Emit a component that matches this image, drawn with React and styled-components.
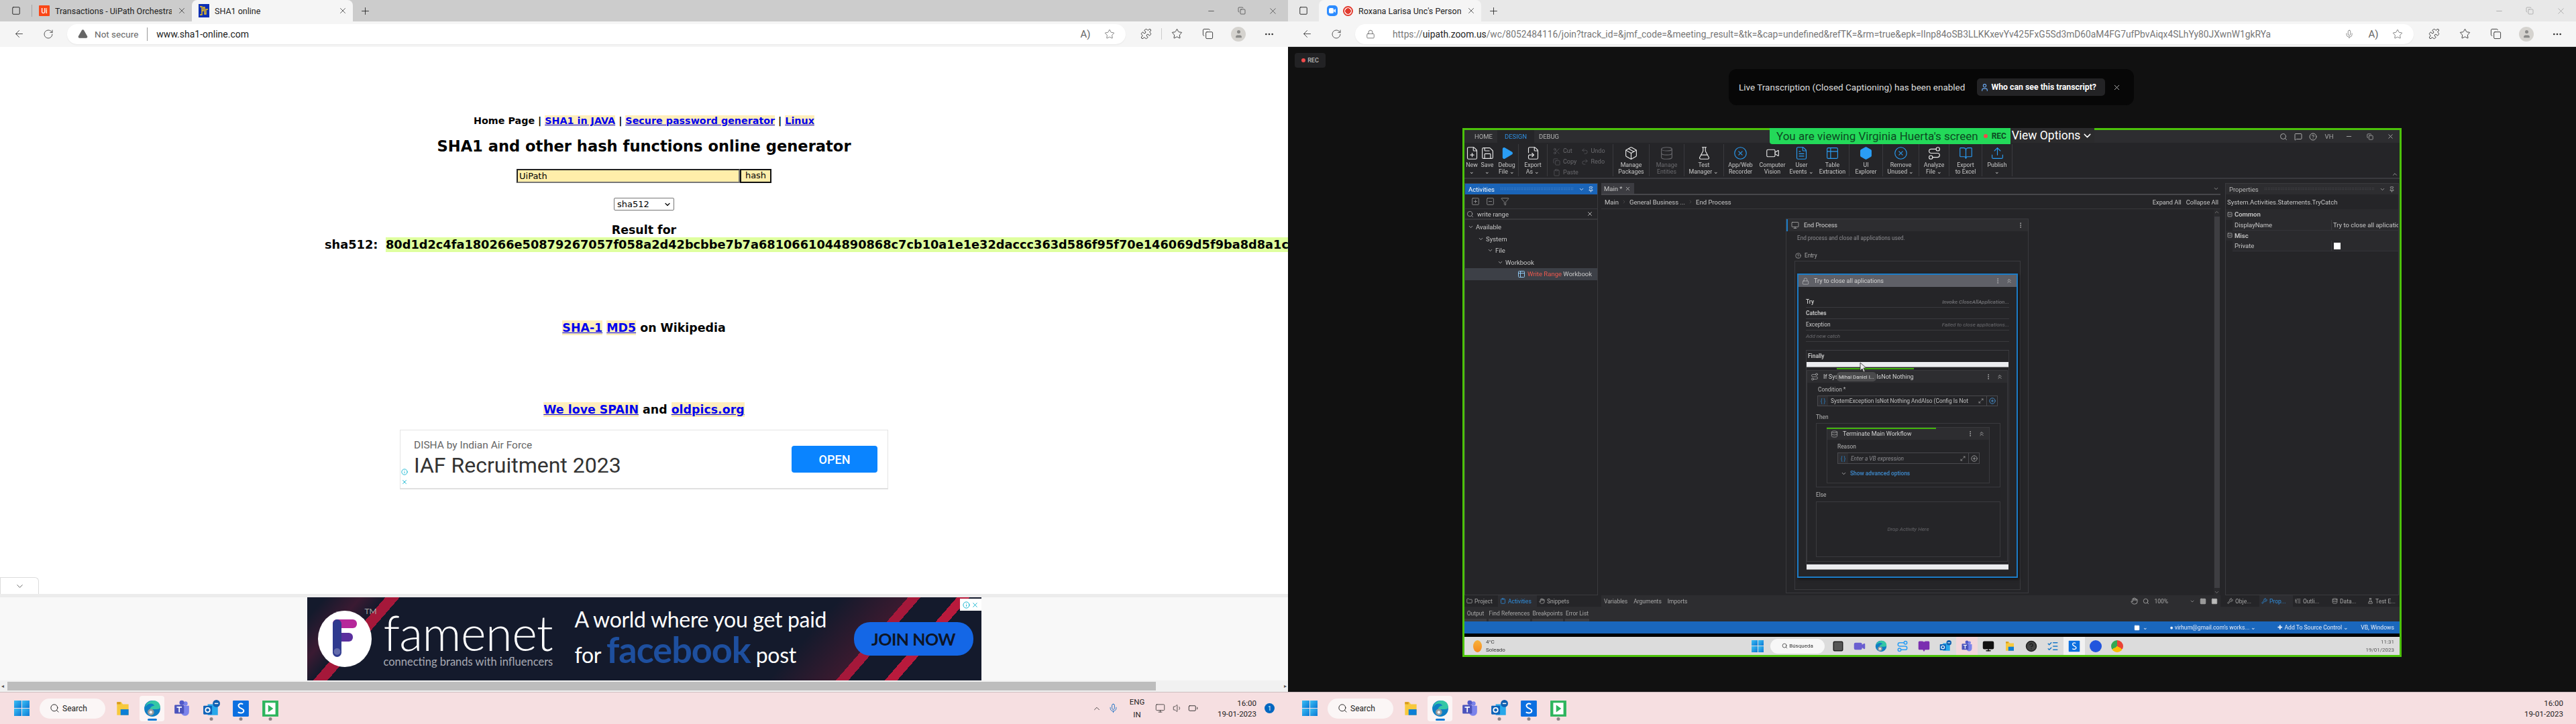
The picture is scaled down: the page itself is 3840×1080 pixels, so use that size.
import React from 'react'
import styled, { createGlobalStyle } from 'styled-components'
import {
  ArrowLeft, RotateCw, Plus, X, Minus, Copy, Star, Puzzle, MoreHorizontal, TriangleAlert, Lock, Search,
  ChevronDown, ChevronUp, ChevronsUp, ChevronRight, Mic, MicOff, Monitor, Volume1, FilePlus, Save, Play, Scissors,
  Undo2, Redo2, Clipboard, Package, Database, FlaskConical, Video, FileText, Table2, Hexagon, CircleX,
  Route, Upload, Pin, Filter, Hand, CircleHelp, MoreVertical, Maximize2, CirclePlus, Battery, Info,
  SquareMinus, SquarePlus, Folder, BookOpen, Wrench, ListTree, Database as DataIcon,
  MessageSquare, FileSymlink, Square, ListChecks, User,
} from 'lucide-react'

const GlobalStyle = createGlobalStyle`
  html, body { margin: 0; padding: 0; background: #fff; }
  body { width: 3840px; height: 1080px; overflow: hidden; font-family: Roboto, "Liberation Sans", sans-serif; }
  * { box-sizing: border-box; }
`

const Screen = styled.div`
  display: flex;
  width: 3840px;
  height: 1080px;
  overflow: hidden;
`

const Browser = styled.div`
  width: 1920px;
  height: 1080px;
  display: flex;
  flex-direction: column;
  overflow: hidden;
`

/* ---------- browser chrome ---------- */

const TabStrip = styled.div`
  height: 32px;
  flex: none;
  display: flex;
  background: ${p => p.$bg};
  color: ${p => p.$fg || '#222'};
`

const TabActions = styled.div`
  width: ${p => p.$w}px;
  display: flex;
  align-items: center;
  justify-content: center;
  position: relative;
  &::after {
    content: ${p => (p.$sep ? "''" : 'none')};
    position: absolute;
    right: 0;
    top: 7px;
    bottom: 7px;
    width: 1px;
    background: #a5a5a5;
  }
`

const Tab = styled.div`
  width: ${p => p.$w}px;
  display: flex;
  align-items: center;
  padding-left: ${p => p.$pad}px;
  padding-right: 8px;
  gap: 8px;
  font-size: 12.5px;
  color: #222;
  border-radius: 8px 8px 0 0;
  background: ${p => (p.$active ? '#f5f5f5' : 'transparent')};
`

const TabTitle = styled.span`
  flex: 1;
  white-space: nowrap;
  overflow: hidden;
`

const NewTab = styled.div`
  width: 36px;
  display: flex;
  align-items: center;
  justify-content: center;
`

const WindowControls = styled.div`
  margin-left: auto;
  display: flex;
  opacity: ${p => (p.$dim ? 0.45 : 1)};
`

const WindowButton = styled.div`
  width: 46px;
  display: flex;
  align-items: center;
  justify-content: center;
`

const Favicon = styled.div`
  width: ${p => p.$size || 16}px;
  height: ${p => p.$size || 16}px;
  flex: none;
  display: flex;
  align-items: center;
  justify-content: center;
  background: ${p => p.$bg};
  color: ${p => p.$fg || '#fff'};
  border-radius: ${p => p.$radius || 0}px;
  font-size: 10px;
  font-weight: 500;
`

const RecDot = styled.div`
  width: 15px;
  height: 15px;
  border-radius: 50%;
  flex: none;
  border: 2px solid #e23b2e;
  background: radial-gradient(circle, #e23b2e 0 4px, #fff 4.5px);
`

const AddressRow = styled.div`
  height: 38px;
  flex: none;
  display: flex;
  align-items: center;
  padding-left: 6px;
  background: #f5f5f5;
  border-bottom: 1px solid ${p => p.$line || 'transparent'};
`

const NavButton = styled.div`
  width: 44px;
  display: flex;
  justify-content: center;
  color: #333;
`

const AddressPill = styled.div`
  margin-left: 6px;
  width: 1578px;
  height: 30px;
  border-radius: 15px;
  background: #fff;
  display: flex;
  align-items: center;
  padding: 0 6px 0 16px;
  box-shadow: 0 1px 2px rgba(0, 0, 0, 0.06);
  color: #222;
  font-size: 14px;
`

const SecurityNote = styled.span`
  color: #666;
  margin-left: 10px;
  padding-right: 13px;
  border-right: 1px solid #999;
  line-height: 20px;
  font-size: 13.5px;
`

const UrlText = styled.span`
  margin-left: ${p => p.$left}px;
  white-space: nowrap;
  color: #777;
  font-size: ${p => p.$size}px;
`

const UrlHost = styled.span`
  color: #222;
`

const PillTools = styled.div`
  margin-left: auto;
  display: flex;
  align-items: center;
  color: #666;
`

const PillTool = styled.div`
  width: 36px;
  display: flex;
  justify-content: center;
  font-size: 15px;
`

const ToolSlot = styled.div`
  width: 46px;
  margin-left: ${p => p.$left || 0}px;
  display: flex;
  justify-content: center;
  color: #333;
  border-left: ${p => (p.$sep ? '1px solid #ccc' : 'none')};
`

const Avatar = styled.div`
  width: 22px;
  height: 22px;
  border-radius: 50%;
  background: #d5d3cf;
  color: #8a8a88;
  display: flex;
  align-items: center;
  justify-content: center;
`

/* ---------- sha1 page ---------- */

const PageFrame = styled.div`
  flex: 1;
  min-height: 0;
  display: flex;
  flex-direction: column;
  background: #fff;
`

const PageBody = styled.div`
  flex: 1;
  min-height: 0;
  overflow: hidden;
  display: flex;
  flex-direction: column;
  align-items: center;
  padding-top: 99px;
  font-family: "DejaVu Sans", Verdana, sans-serif;
  font-weight: 700;
  color: #000;
`

const TextLine = styled.div`
  line-height: 22px;
  height: 22px;
  white-space: nowrap;
  margin-top: ${p => p.$top || 0}px;
  font-size: ${p => p.$size}px;
`

const SiteLink = styled.a`
  color: #0000ee;
  text-decoration: underline;
  background: #ffeebb;
  padding: ${p => p.$pad || 0}px 0;
`

const PageTitle = styled.h1`
  margin: 12px 0 0;
  height: 30px;
  line-height: 30px;
  font-size: 22.6px;
  white-space: nowrap;
`

const HashForm = styled.div`
  margin-top: 19px;
  display: flex;
  height: 21px;
`

const HashInput = styled.div`
  width: 333px;
  background: #ffeeaa;
  border: 2px solid;
  border-color: #222 #777 #777 #222;
  padding-left: 2px;
  line-height: 17px;
  font-weight: 400;
  font-size: 13px;
`

const HashButton = styled.div`
  width: 47px;
  background: #ffeeaa;
  border: 2px solid #111;
  text-align: center;
  line-height: 16px;
  font-weight: 400;
  font-size: 13px;
`

const AlgoSelect = styled.div`
  margin-top: 22px;
  width: 90px;
  height: 19px;
  border: 1px solid #767676;
  border-radius: 2px;
  display: flex;
  align-items: center;
  justify-content: space-between;
  padding: 0 3px 0 4px;
  font-weight: 400;
  font-size: 13px;
`

const HashRow = styled.div`
  align-self: flex-start;
  display: flex;
  padding-left: 484px;
  height: 22px;
  line-height: 22px;
  white-space: nowrap;
  font-size: 17.75px;
`

const HashLabel = styled.span`
  width: 91px;
  flex: none;
`

const HashValue = styled.span`
  background: #dfff9f;
  padding-right: 200px;
`

const AdCard = styled.div`
  margin-top: 19px;
  width: 728px;
  height: 89px;
  flex: none;
  border: 1px solid #e4e4e4;
  border-bottom: 2px solid #e0e0e0;
  position: relative;
  display: flex;
  align-items: center;
  justify-content: space-between;
  padding: 0 15px 0 20px;
  font-family: Roboto, "Liberation Sans", sans-serif;
  font-weight: 400;
`

const AdSponsor = styled.div`
  font-size: 15.5px;
  color: #666;
  margin-top: -2px;
`

const AdTitle = styled.div`
  font-size: 32px;
  color: #333;
  margin-top: 2px;
`

const AdOpen = styled.div`
  width: 128px;
  height: 40px;
  background: #0a84ff;
  color: #fff;
  border-radius: 4px;
  display: flex;
  align-items: center;
  justify-content: center;
  font-size: 18px;
  font-weight: 500;
`

const AdChoices = styled.div`
  position: absolute;
  left: 1px;
  bottom: ${p => p.$bottom}px;
  color: #00aecd;
  display: flex;
`

const AnchorTab = styled.div`
  width: 58px;
  height: 25px;
  flex: none;
  background: #fff;
  border: 1px solid #dcdcdc;
  border-bottom: none;
  border-radius: 0 6px 0 0;
  display: flex;
  align-items: center;
  justify-content: center;
  color: #555;
`

const AnchorAd = styled.div`
  height: 129px;
  flex: none;
  background: #f8f8f8;
  border-top: 5px solid #ececec;
  display: flex;
  justify-content: center;
`

const FameBanner = styled.div`
  width: 1005px;
  height: 124px;
  position: relative;
  display: flex;
  align-items: center;
  color: #fff;
  font-family: Lato, "Open Sans", sans-serif;
  background-color: #141a2c;
  background-image:
    linear-gradient(131deg, transparent 88px, #a5183a 88px, #a5183a 104px, transparent 104px),
    linear-gradient(131deg, transparent 676px, #a5183a 676px, #a5183a 690px, transparent 690px, transparent 731px, #b81a3c 731px, #b81a3c 745px, transparent 745px),
    linear-gradient(131deg, transparent 20px, #3a1a32 60px, transparent 88px),
    linear-gradient(131deg, transparent 600px, #3a1a2f 676px, transparent 676px);
`

const FameCircle = styled.div`
  width: 80px;
  height: 84px;
  border-radius: 50%;
  background: #fff;
  margin-left: 16px;
  flex: none;
  display: flex;
  align-items: center;
  justify-content: center;
`

const FameBrand = styled.div`
  margin-left: 18px;
  width: 285px;
  flex: none;
  position: relative;
`

const FameName = styled.div`
  font-size: 72px;
  line-height: 66px;
  font-weight: 300;
  letter-spacing: -0.5px;
`

const FameTag = styled.div`
  font-size: 16.5px;
  color: #a8abb4;
  margin-top: 1px;
  white-space: nowrap;
`

const FameTm = styled.span`
  position: absolute;
  left: -28px;
  top: -6px;
  font-size: 12px;
  color: #aaa;
`

const FameCopy = styled.div`
  flex: none;
  width: 400px;
`

const FameLine = styled.div`
  font-size: ${p => p.$size}px;
  line-height: ${p => p.$line}px;
  white-space: nowrap;
  letter-spacing: -0.3px;
`

const FameWord = styled.span`
  color: #1e4f9e;
  font-size: 54px;
  font-weight: 700;
  margin: 0 8px;
  letter-spacing: -1px;
`

const JoinNow = styled.div`
  margin-left: 16px;
  width: 178px;
  height: 50px;
  flex: none;
  border-radius: 24px;
  background: #1467e6;
  color: #0d1526;
  display: flex;
  align-items: center;
  justify-content: center;
  font-size: 25px;
  font-weight: 700;
  letter-spacing: -0.5px;
`

const AdBadge = styled.div`
  position: absolute;
  top: 2px;
  right: 0;
  width: 32px;
  height: 18px;
  display: flex;
  justify-content: center;
  gap: 2px;
  background: #fff;
  color: #00aecd;
  align-items: center;
`

const HScrollbar = styled.div`
  height: 17px;
  flex: none;
  background: #f1f1f1;
  display: flex;
  align-items: center;
  padding: 0 2px;
  gap: 5px;
  color: #555;
  font-size: 8px;
`

const HThumb = styled.div`
  width: 1712px;
  height: 13px;
  background: #bdbdbd;
`

const HEnd = styled.span`
  margin-left: auto;
`

/* ---------- windows taskbar ---------- */

const Taskbar = styled.div`
  height: 48px;
  flex: none;
  display: flex;
  align-items: center;
  padding-left: 21px;
  background: #f6dfe1;
  border-top: 1px solid #cdbdbf;
  color: #222;
`

const StartLogo = styled.div`
  width: ${p => p.$size}px;
  height: ${p => p.$size}px;
  flex: none;
  display: grid;
  grid-template-columns: 1fr 1fr;
  gap: 1px;
  & > i { background: linear-gradient(135deg, #3cc0f5, #0b78d4); }
`

const SearchPill = styled.div`
  margin-left: 15px;
  margin-right: 4px;
  width: 98px;
  height: 30px;
  border-radius: 15px;
  background: #fbf6f6;
  display: flex;
  align-items: center;
  padding-left: 15px;
  gap: 4px;
  font-size: 12px;
`

const TaskSlot = styled.div`
  width: 44px;
  height: 47px;
  flex: none;
  display: flex;
  align-items: center;
  justify-content: center;
  position: relative;
  &::before {
    content: ${p => (p.$active ? "''" : 'none')};
    position: absolute;
    left: 3px;
    right: 4px;
    top: 5px;
    bottom: 4px;
    background: #fcf5f5;
    border-radius: 4px;
  }
  &::after {
    content: ${p => (p.$mark ? "''" : 'none')};
    position: absolute;
    bottom: 5px;
    left: 50%;
    width: ${p => (p.$active ? 14 : 5)}px;
    height: ${p => (p.$active ? 3 : 5)}px;
    transform: translateX(-50%);
    border-radius: 3px;
    background: ${p => (p.$active ? '#0a7ad6' : '#8c8487')};
  }
  & > svg { position: relative; z-index: 1; }
`

const Tray = styled.div`
  margin-left: auto;
  padding-right: ${p => p.$pad}px;
  display: flex;
  align-items: center;
  height: 100%;
`

const TraySlot = styled.div`
  width: ${p => p.$w}px;
  display: flex;
  justify-content: center;
  text-align: center;
  font-size: 11.5px;
  line-height: 19px;
`

const Clock = styled.div`
  text-align: right;
  font-size: 11.5px;
  line-height: 16px;
`

const NotifyDot = styled.div`
  margin-left: 12px;
  width: 15px;
  height: 15px;
  border-radius: 50%;
  background: #0067c0;
  color: #fff;
  font-size: 9px;
  display: flex;
  align-items: center;
  justify-content: center;
`

/* ---------- zoom meeting ---------- */

const MeetingStage = styled.div`
  flex: 1;
  min-height: 0;
  background: #111111;
  position: relative;
  padding: 121px 260px 0;
`

const RecBadge = styled.div`
  position: absolute;
  left: 10px;
  top: 9px;
  width: 46px;
  height: 22px;
  border-radius: 4px;
  background: #222224;
  color: #bbb;
  font-size: 9px;
  font-weight: 500;
  display: flex;
  align-items: center;
  justify-content: center;
  gap: 3px;
  &::before {
    content: '';
    width: 6px;
    height: 6px;
    border-radius: 50%;
    background: #f04b4b;
  }
`

const CaptionToast = styled.div`
  position: absolute;
  left: 657px;
  top: 33px;
  width: 604px;
  height: 54px;
  border-radius: 12px;
  background: #070707;
  color: #dedede;
  display: flex;
  align-items: center;
  padding-left: 15px;
  font-size: 13.5px;
  white-space: nowrap;
`

const WhoButton = styled.div`
  margin-left: 18px;
  width: 191px;
  height: 26px;
  border-radius: 5px;
  background: #232325;
  color: #fff;
  font-weight: 700;
  font-size: 12.3px;
  display: flex;
  align-items: center;
  gap: 3px;
  padding-left: 5px;
`

const ToastClose = styled.div`
  margin-left: 11px;
  display: flex;
`

const ShareFrame = styled.div`
  width: 1400px;
  height: 789px;
  position: relative;
  border: 3px solid #4cc20a;
  background: #252528;
`

const ViewingBanner = styled.div`
  position: absolute;
  left: 455px;
  top: -3px;
  width: 359px;
  height: 24px;
  background: #23d959;
  color: #0c4a22;
  border-radius: 0 0 0 4px;
  display: flex;
  align-items: center;
  gap: 4px;
  padding-left: 10px;
  font-size: 17px;
  white-space: nowrap;
`

const BannerRec = styled.span`
  margin-left: auto;
  margin-right: 10px;
  font-size: 12px;
  font-weight: 700;
  display: flex;
  align-items: center;
  gap: 6px;
  &::before {
    content: '';
    width: 6px;
    height: 6px;
    border-radius: 50%;
    background: #f04b4b;
  }
`

const ViewOptions = styled.div`
  position: absolute;
  left: 814px;
  top: -3px;
  width: 125px;
  height: 22px;
  background: #2b2b2d;
  color: #fff;
  display: flex;
  align-items: center;
  justify-content: center;
  gap: 2px;
  font-size: 17.5px;
  white-space: nowrap;
`

const Studio = styled.div`
  height: 100%;
  display: flex;
  flex-direction: column;
  color: #c8c8c8;
  font-size: 9px;
  filter: blur(0.3px);
  overflow: hidden;
`

const StudioTitle = styled.div`
  height: 19px;
  flex: none;
  display: flex;
  align-items: stretch;
  background: #2d2d30;
  padding-left: 8px;
  font-size: 9.5px;
`

const StudioMenu = styled.div`
  width: ${p => p.$w}px;
  display: flex;
  align-items: center;
  justify-content: center;
  background: ${p => (p.$active ? '#252528' : 'transparent')};
  color: ${p => (p.$active ? '#2f8fe0' : '#b4b4b4')};
`

const TitleTools = styled.div`
  margin-left: auto;
  display: flex;
  align-items: center;
  color: #aaa;
`

const TitleTool = styled.div`
  width: ${p => p.$w}px;
  display: flex;
  justify-content: center;
  font-size: 9.5px;
`

const Ribbon = styled.div`
  height: 54px;
  flex: none;
  display: flex;
  background: #252528;
  border-bottom: 2px solid #3a3a3e;
  position: relative;
`

const RibbonItem = styled.div`
  width: ${p => p.$w}px;
  flex: none;
  margin: 2px 0;
  padding-top: 3px;
  display: flex;
  flex-direction: column;
  align-items: center;
  text-align: center;
  line-height: 9.5px;
  font-size: 8.8px;
  color: ${p => (p.$dim ? '#6b6b6f' : '#c8c8c8')};
  border-right: 1px solid ${p => (p.$sep ? '#3a3a3e' : 'transparent')};
  & > svg { flex: none; margin-bottom: 3px; }
`

const RibbonClip = styled.div`
  width: 98px;
  flex: none;
  margin: 2px 0;
  display: grid;
  grid-template-columns: 1fr 1fr;
  grid-auto-rows: 16px;
  padding: 2px 6px 0 8px;
  border-right: 1px solid #3a3a3e;
  color: #6b6b6f;
  font-size: 9px;
`

const ClipAction = styled.div`
  display: flex;
  align-items: center;
  gap: 4px;
`

const RibbonCollapse = styled.div`
  position: absolute;
  right: 2px;
  bottom: 0;
  display: flex;
  color: #aaa;
`

const PanelRow = styled.div`
  flex: 1;
  min-height: 0;
  display: flex;
  padding-top: 6px;
  background: #252528;
`

const SideColumn = styled.div`
  width: ${p => p.$w}px;
  margin-right: ${p => p.$gap}px;
  flex: none;
  display: flex;
  flex-direction: column;
`

const PanelBox = styled.div`
  flex: 1;
  min-height: 0;
  border: 1px solid #3a3a3e;
  display: flex;
  flex-direction: column;
`

const PanelHeader = styled.div`
  height: 16px;
  flex: none;
  display: flex;
  align-items: center;
  gap: 5px;
  padding: 0 5px;
  background: ${p => (p.$active ? '#1a64b8' : '#2d2d30')};
  color: ${p => (p.$active ? '#fff' : '#b8b8b8')};
  font-size: 9.5px;
`

const HeaderDots = styled.span`
  flex: 1;
  height: 6px;
  margin: 0 3px;
  background-image: radial-gradient(${p => (p.$active ? '#6ea0d8' : '#5a5a5e')} 0.6px, transparent 0.7px);
  background-size: 2.5px 2.5px;
`

const IconBar = styled.div`
  height: 22px;
  flex: none;
  display: flex;
  align-items: center;
  padding-left: 9px;
  gap: 9px;
  color: #b0b0b0;
  border-bottom: 1px solid #3a3a3e;
`

const TreeSearch = styled.div`
  height: 16px;
  flex: none;
  display: flex;
  align-items: center;
  gap: 5px;
  padding: 0 6px 0 2px;
  font-size: 9.5px;
  color: #c8c8c8;
  border-bottom: 2px solid #37373b;
`

const SearchClear = styled.span`
  margin-left: auto;
  display: flex;
`

const Tree = styled.div`
  padding-top: 2px;
`

const TreeRow = styled.div`
  height: 17.5px;
  display: flex;
  align-items: center;
  gap: 3px;
  padding-left: ${p => p.$indent}px;
  font-size: 9.5px;
  background: ${p => (p.$hit ? '#3d4047' : 'transparent')};
`

const TreeHit = styled.span`
  color: #f0584d;
`

const DockTabs = styled.div`
  height: 17px;
  flex: none;
  display: flex;
  align-items: center;
  font-size: 8.5px;
`

const DockTab = styled.div`
  width: ${p => p.$w}px;
  height: 100%;
  display: flex;
  align-items: center;
  gap: 3px;
  padding-left: 3px;
  color: ${p => (p.$active ? '#2f8fe0' : '#a8a8a8')};
  background: ${p => (p.$active ? '#2d2d31' : 'transparent')};
  white-space: nowrap;
`

const DesignerFooter = styled(DockTabs)`
  background: #2d2d30;
  padding-left: 4px;
  gap: 9px;
  color: #aaa;
`

const ZoomTools = styled.span`
  margin-left: auto;
  display: flex;
  align-items: center;
  gap: 7px;
  padding-right: 4px;
`

const ZoomGap = styled.span`
  width: 18px;
`

const CenterColumn = styled.div`
  width: 923px;
  margin-right: 7px;
  flex: none;
  display: flex;
  flex-direction: column;
`

const DocTabs = styled.div`
  height: 18px;
  flex: none;
  display: flex;
  justify-content: space-between;
  align-items: stretch;
  border-bottom: 2px solid #47474b;
  padding-right: 2px;
  color: #aaa;
`

const DocTab = styled.div`
  width: 49px;
  display: flex;
  align-items: center;
  justify-content: space-between;
  padding: 0 5px 0 4px;
  background: #3c3c41;
  color: #c8c8c8;
  font-size: 9.5px;
`

const DocTabEnd = styled.div`
  display: flex;
  align-items: center;
`

const Breadcrumbs = styled.div`
  height: 21px;
  flex: none;
  display: flex;
  align-items: center;
  gap: 4px;
  padding: 0 3px 0 5px;
  border-bottom: 1px solid #37373b;
  font-size: 9.5px;
`

const CrumbEnd = styled.div`
  margin-left: auto;
  display: flex;
  gap: 7px;
  font-size: 9.2px;
`

const CanvasRow = styled.div`
  flex: 1;
  min-height: 0;
  display: flex;
`

const Canvas = styled.div`
  flex: 1;
  min-width: 0;
  padding: 14px 0 0 275px;
  overflow: hidden;
`

const VScroll = styled.div`
  width: 9px;
  margin-right: 1px;
  flex: none;
  display: flex;
  flex-direction: column;
  align-items: center;
  color: #888;
  background: #2a2a2d;
`

const VThumb = styled.div`
  width: 8px;
  flex: 1;
  background: #3e3e42;
  margin: 2px 0;
`

const Activity = styled.div`
  width: ${p => p.$w}px;
  height: ${p => p.$h}px;
  margin-left: ${p => p.$left || 0}px;
  margin-top: ${p => p.$top || 0}px;
  flex: none;
  border: 1px solid #3a3a3e;
  position: relative;
`

const ActivityHead = styled.div`
  height: 18px;
  display: flex;
  align-items: center;
  gap: 7px;
  padding: 0 6px 0 5px;
  background: ${p => p.$bg || '#2d2d30'};
  border-left: ${p => (p.$mark ? '2px solid #1c7cc7' : 'none')};
  color: #d4d4d4;
  font-size: 9px;
`

const HeadEnd = styled.span`
  margin-left: auto;
  display: flex;
  align-items: center;
  gap: 7px;
  color: #bbb;
`

const Muted = styled.div`
  color: #8e8e92;
  font-size: 8.2px;
  line-height: 12px;
  padding: ${p => p.$pad || 0};
`

const EntryLabel = styled.div`
  display: flex;
  align-items: center;
  gap: 5px;
  padding-left: 13px;
  margin-top: ${p => p.$top}px;
  height: 12px;
  color: #aaa;
  font-size: 8.2px;
`

const TryCard = styled.div`
  margin: 18px 0 0 3px;
  width: 329px;
  height: 454px;
  border: 2px solid #1c7cc7;
  background: #252528;
  box-shadow: 2px 2px 4px rgba(0, 0, 0, 0.5);
  position: relative;
`

const TryRows = styled.div`
  padding: 14px 11px 0 11px;
`

const TryRow = styled.div`
  height: 17px;
  display: flex;
  align-items: center;
  justify-content: space-between;
  border-bottom: 1px solid #3a3a3e;
  font-size: 8.4px;
  font-weight: ${p => (p.$bold ? 600 : 400)};
  color: #c8c8c8;
`

const Hint = styled.span`
  font-style: italic;
  color: #6c6c70;
  font-size: 8px;
`

const FinallyBox = styled.div`
  margin: 12px 11px 0;
  height: 320px;
  border: 1px solid #38383c;
  border-top-color: #3e3e42;
  padding: 1px 0 0 0;
`

const FinallyLabel = styled.div`
  height: 16px;
  line-height: 14px;
  padding-left: 2px;
  font-size: 8.4px;
  font-weight: 600;
`

const WhiteBar = styled.div`
  height: 8px;
  background: #ecedf0;
  border-bottom: 1px solid #999;
  margin: ${p => p.$margin || '0'};
  width: 301px;
`

const FieldLabel = styled.div`
  font-size: 8.4px;
  height: 12px;
  line-height: 12px;
  color: #b5b5b5;
  padding-left: ${p => p.$left}px;
  margin-top: ${p => p.$top}px;
`

const ExprField = styled.div`
  width: ${p => p.$w}px;
  height: ${p => p.$h}px;
  margin-left: ${p => p.$left}px;
  margin-top: 3px;
  border: 1px solid #4a4a4e;
  display: flex;
  align-items: center;
  font-size: 8.4px;
  color: #c0c0c0;
`

const ExprBrace = styled.span`
  width: 15px;
  height: 100%;
  display: flex;
  align-items: center;
  justify-content: center;
  background: #2e2e32;
  color: #2a7fc0;
  margin-right: 4px;
  flex: none;
`

const ExprText = styled.span`
  flex: 1;
  overflow: hidden;
  white-space: nowrap;
  font-style: ${p => (p.$hint ? 'italic' : 'normal')};
  color: ${p => (p.$hint ? '#8c8c90' : '#c0c0c0')};
`

const ExprTool = styled.span`
  width: 16px;
  height: 100%;
  display: flex;
  align-items: center;
  justify-content: center;
  border-left: ${p => (p.$line ? '1px solid #4a4a4e' : 'none')};
  color: #aaa;
  flex: none;
`

const AdvancedLine = styled.div`
  display: flex;
  align-items: center;
  gap: 5px;
  margin: 9px 0 0 20px;
  color: #3d86c6;
  font-weight: 600;
  font-size: 8.4px;
`

const DropHint = styled.div`
  height: 100%;
  display: flex;
  align-items: center;
  justify-content: center;
  font-style: italic;
  color: #66666a;
  font-size: 8px;
`

const GreenStroke = styled.div`
  position: absolute;
  left: ${p => p.$left}px;
  top: ${p => p.$top}px;
  width: ${p => p.$w}px;
  height: 1.5px;
  background: #42b30c;
`

const NameTip = styled.div`
  position: absolute;
  left: 44px;
  top: 2px;
  width: 59px;
  height: 14px;
  border-radius: 5px;
  background: #4a4a4c;
  color: #ddd;
  font-size: 7.8px;
  display: flex;
  align-items: center;
  justify-content: center;
  white-space: nowrap;
`

const PointerMark = styled.svg`
  position: absolute;
  left: 78px;
  top: -13px;
`

const TypeLine = styled.div`
  height: 22px;
  flex: none;
  display: flex;
  align-items: center;
  padding-left: 2px;
  font-size: 9.5px;
  white-space: nowrap;
  overflow: hidden;
`

const PropGroup = styled.div`
  height: 15.5px;
  display: flex;
  align-items: center;
  gap: 3px;
  padding-left: 2px;
  background: #2a2a2d;
  font-weight: 600;
  font-size: 9.5px;
`

const PropRow = styled.div`
  height: 16px;
  display: grid;
  grid-template-columns: 147px 1fr;
  align-items: center;
  margin-left: 10px;
  background: #2a2a2d;
  border-bottom: 1px solid #343438;
  font-size: 9.5px;
`

const PropKey = styled.span`
  padding-left: 3px;
`

const PropValue = styled.span`
  border-left: 1px solid #3a3a3e;
  padding-left: 2px;
  height: 100%;
  display: flex;
  align-items: center;
  white-space: nowrap;
  overflow: hidden;
`

const PropCheck = styled.span`
  width: 10px;
  height: 10px;
  background: #fff;
  margin-left: 1px;
`

const OutputTabs = styled.div`
  height: 22px;
  flex: none;
  display: flex;
  background: #2d2d30;
  padding-top: 5px;
  gap: 3px;
  font-size: 8.5px;
`

const OutputTab = styled.div`
  width: ${p => p.$w}px;
  height: 17px;
  text-align: center;
  white-space: nowrap;
  border-bottom: 4px solid #3d3d41;
  color: #a8a8a8;
`

const StatusBar = styled.div`
  height: 18px;
  flex: none;
  background: #1a67bd;
  color: #e8eefa;
  display: flex;
  align-items: center;
  justify-content: flex-end;
  gap: 8px;
  padding-right: 8px;
  font-size: 8.6px;
`

const StatusPart = styled.span`
  display: flex;
  align-items: center;
  gap: 4px;
  margin-right: ${p => p.$gap || 0}px;
  white-space: nowrap;
`

const BlackBand = styled.div`
  height: 5px;
  flex: none;
  background: #000;
`

const InnerTaskbar = styled.div`
  height: 27px;
  flex: none;
  background: #dcdcdc;
  display: flex;
  align-items: center;
  color: #333;
  font-size: 8px;
  padding-left: 13px;
`

const Weather = styled.div`
  width: 415px;
  flex: none;
  display: flex;
  align-items: center;
  gap: 6px;
  line-height: 12px;
`

const SunDot = styled.div`
  width: 13px;
  height: 18px;
  border-radius: 50%;
  background: linear-gradient(#f7b23c, #f58a1f);
`

const InnerSearch = styled.div`
  width: 81px;
  height: 22px;
  margin: 0 4px 0 10px;
  border-radius: 11px;
  background: #f7f7f7;
  display: flex;
  align-items: center;
  justify-content: center;
  gap: 2px;
  font-size: 8px;
  flex: none;
`

const InnerSlot = styled.div`
  width: 32px;
  height: 100%;
  flex: none;
  display: flex;
  align-items: center;
  justify-content: center;
  background: ${p => p.$bg || 'transparent'};
`

const InnerClock = styled.div`
  margin-left: auto;
  padding-right: 8px;
  text-align: right;
  line-height: 12px;
  color: #555;
`

/* ---------- small drawings ---------- */

const UiPathIcon = () => (
  <Favicon $size={16} $bg="#fa4616" $fg="#fff" $radius={1}>Ui</Favicon>
)

const ShaIcon = () => (
  <svg width="16" height="20" viewBox="0 0 16 20">
    <rect width="16" height="20" fill="#0d2fb5" />
    <path d="M2 4h3v12H2M5 10h2V5h2v10h2V8h3" fill="none" stroke="#f2c21a" strokeWidth="1.4" />
  </svg>
)

const ZoomIcon = () => (
  <Favicon $size={16} $bg="#2d8cff" $radius={5}>
    <svg width="10" height="8" viewBox="0 0 10 8"><rect width="7" height="8" rx="2" fill="#fff" /><path d="M7.5 3l2.5-2v6L7.5 5z" fill="#fff" /></svg>
  </Favicon>
)

const ExplorerIcon = ({ size = 26 }) => (
  <svg width={size} height={size} viewBox="0 0 24 24">
    <path d="M4 3h6l2 3h8v15H4z" fill="#f7c93e" />
    <path d="M4 3h5v3H4z" fill="#d89a1c" />
    <rect x="9" y="13" width="11" height="8" fill="#0d7fd6" />
  </svg>
)

const EdgeIcon = ({ size = 26 }) => (
  <svg width={size} height={size} viewBox="0 0 24 24">
    <circle cx="12" cy="12" r="11" fill="#0f7fc4" />
    <path d="M2 11C3 4 9 1 14 1c5 0 9 4 9 9 0 2-2 3-5 3H9c0-3 3-5 6-5-1-2-3-3-5-3-4 0-7 3-8 6z" fill="#35c7a5" />
    <circle cx="10" cy="17" r="4.5" fill="#9a9a9a" />
    <circle cx="10" cy="17" r="2" fill="#f1f1f1" />
  </svg>
)

const TeamsIcon = ({ size = 26 }) => (
  <svg width={size} height={size} viewBox="0 0 24 24">
    <circle cx="17" cy="5" r="3" fill="#7b83eb" />
    <path d="M11 8h11v8a5 5 0 0 1-11 1z" fill="#7b83eb" />
    <circle cx="12" cy="4" r="3.2" fill="#5059c9" />
    <rect x="2" y="7" width="13" height="12" rx="1" fill="#4b53bc" />
    <path d="M5 10h7M8.5 10v7" stroke="#fff" strokeWidth="1.6" />
  </svg>
)

const OutlookIcon = ({ size = 26 }) => (
  <svg width={size} height={size} viewBox="0 0 24 24">
    <rect x="7" y="6" width="14" height="15" fill="#28a8ea" />
    <rect x="1" y="8" width="12" height="12" rx="1" fill="#0f63b8" />
    <circle cx="7" cy="14" r="3" fill="none" stroke="#fff" strokeWidth="1.6" />
    <circle cx="19" cy="5" r="5" fill="#0f5fb0" />
    <path d="M16.5 5h5" stroke="#fff" strokeWidth="1.4" />
  </svg>
)

const SwapIcon = ({ size = 26 }) => (
  <svg width={size} height={size} viewBox="0 0 24 24">
    <rect x="1" y="1" width="22" height="22" rx="1" fill="#0b6fe0" />
    <path d="M15 6c-4-2-7 0-6 3 1 3 7 3 7 6s-4 4-8 2" fill="none" stroke="#fff" strokeWidth="1.8" />
  </svg>
)

const GreenAppIcon = ({ size = 26 }) => (
  <svg width={size} height={size} viewBox="0 0 24 24">
    <rect x="1" y="1" width="22" height="22" fill="#2db55d" />
    <rect x="5" y="4" width="14" height="16" fill="#fff" />
    <path d="M9 7l7 5-7 5z" fill="#2db55d" />
  </svg>
)

const FameMark = () => (
  <svg width="44" height="62" viewBox="0 0 44 62">
    <rect x="4" y="2" width="36" height="13" rx="6" fill="#b6279a" />
    <rect x="4" y="22" width="30" height="13" rx="6" fill="#5a2f9e" />
    <rect x="4" y="2" width="13" height="56" rx="6.5" fill="#2f3a8f" />
    <circle cx="10.5" cy="50" r="5" fill="#fff" opacity="0.25" />
  </svg>
)

const PageCursor = () => (
  <PointerMark width="12" height="17" viewBox="0 0 12 17">
    <path d="M1 1v12l3-3 2 5 2-1-2-5h4z" fill="#eee" stroke="#222" strokeWidth="0.8" />
  </PointerMark>
)

/* ---------- data ---------- */

const ribbonItems = [
  { key: 'new', w: 23, label: ['New', '⌄'], icon: FilePlus, color: '#e8e8e8' },
  { key: 'save', w: 23, label: ['Save', '⌄'], icon: Save, color: '#e8e8e8' },
  { key: 'debug', w: 35, label: ['Debug', 'File ⌄'], icon: Play, color: '#2a9df4', fill: true, sep: true },
  { key: 'export', w: 43, label: ['Export', 'As ⌄'], icon: FileSymlink, color: '#e8e8e8', sep: true },
  { key: 'clip' },
  { key: 'pack', w: 54, label: ['Manage', 'Packages'], icon: Package, color: '#e8e8e8', sep: true },
  { key: 'ent', w: 52, label: ['Manage', 'Entities'], icon: Database, color: '#66666a', dim: true, sep: true },
  { key: 'test', w: 59, label: ['Test', 'Manager ⌄'], icon: FlaskConical, color: '#e8e8e8', sep: true },
  { key: 'rec', w: 50, label: ['App/Web', 'Recorder'], icon: CircleX, color: '#2a9df4' },
  { key: 'vis', w: 45, label: ['Computer', 'Vision'], icon: Video, color: '#e8e8e8' },
  { key: 'evt', w: 42, label: ['User', 'Events ⌄'], icon: FileText, color: '#2a9df4' },
  { key: 'tab', w: 50, label: ['Table', 'Extraction'], icon: Table2, color: '#2a9df4', sep: true },
  { key: 'ui', w: 50, label: ['UI', 'Explorer'], icon: Hexagon, color: '#2a9df4', fill: true, sep: true },
  { key: 'rem', w: 54, label: ['Remove', 'Unused ⌄'], icon: CircleX, color: '#2a9df4', sep: true },
  { key: 'ana', w: 45, label: ['Analyze', 'File ⌄'], icon: Route, color: '#e8e8e8', sep: true },
  { key: 'xls', w: 49, label: ['Export', 'to Excel'], icon: BookOpen, color: '#2a9df4', sep: true },
  { key: 'pub', w: 45, label: ['Publish', '⌄'], icon: Upload, color: '#2a9df4', sep: true },
]

const innerTaskIcons = [
  { key: 'a', icon: () => <Square size={18} color="#222" fill="#555" /> },
  { key: 'b', icon: () => <Video size={18} color="#6a5fd0" fill="#6a5fd0" /> },
  { key: 'c', icon: () => <EdgeIcon size={18} /> },
  { key: 'd', icon: () => <Route size={18} color="#2a9df4" /> },
  { key: 'e', icon: () => <BookOpen size={18} color="#7a2fb0" fill="#7a2fb0" /> },
  { key: 'f', icon: () => <OutlookIcon size={18} /> },
  { key: 'g', icon: () => <TeamsIcon size={18} />, bg: '#f3d8dc' },
  { key: 'h', icon: () => <Monitor size={18} color="#111" fill="#111" /> },
  { key: 'i', icon: () => <ExplorerIcon size={18} /> },
  { key: 'j', icon: () => <CircleHelp size={18} color="#222" fill="#444" /> },
  { key: 'k', icon: () => <ListChecks size={18} color="#1677c8" /> },
  { key: 'l', icon: () => <SwapIcon size={18} />, bg: '#f2f2f2' },
  { key: 'm', icon: () => <Favicon $size={18} $bg="#2255dd" $radius={9} /> },
  { key: 'n', icon: () => <Favicon $size={18} $bg="conic-gradient(#ea4335 0 33%, #fbbc05 33% 66%, #34a853 66%)" $radius={9} /> },
]

const hashValue = '80d1d2c4fa180266e50879267057f058a2d42bcbbe7b7a6810661044890868c7cb10a1e1e32daccc363d586f95f70e146069d5f9ba8d8a1c'

/* ---------- parts ---------- */

function SharedTaskIcons() {
  return (
    <>
      <TaskSlot><ExplorerIcon /></TaskSlot>
      <TaskSlot $active $mark><EdgeIcon /></TaskSlot>
      <TaskSlot><TeamsIcon /></TaskSlot>
      <TaskSlot $mark><OutlookIcon /></TaskSlot>
      <TaskSlot $mark><SwapIcon /></TaskSlot>
      <TaskSlot $mark><GreenAppIcon /></TaskSlot>
    </>
  )
}

function Start({ size = 23 }) {
  return (
    <StartLogo $size={size}><i /><i /><i /><i /></StartLogo>
  )
}

function BrowserTools({ sep }) {
  return (
    <>
      <ToolSlot $left={7}><Puzzle size={17} strokeWidth={1.3} /></ToolSlot>
      <ToolSlot $sep={sep}><Star size={17} strokeWidth={1.3} /></ToolSlot>
      <ToolSlot><Copy size={17} strokeWidth={1.3} /></ToolSlot>
      <ToolSlot><Avatar><User size={15} fill="#8a8a88" strokeWidth={0} /></Avatar></ToolSlot>
      <ToolSlot><MoreHorizontal size={16} strokeWidth={2} /></ToolSlot>
    </>
  )
}

function WindowButtons({ dim }) {
  return (
    <WindowControls $dim={dim}>
      <WindowButton><Minus size={13} strokeWidth={1.2} /></WindowButton>
      <WindowButton><Copy size={12} strokeWidth={1.2} /></WindowButton>
      <WindowButton><X size={15} strokeWidth={1} /></WindowButton>
    </WindowControls>
  )
}

function ShaPage() {
  return (
    <PageFrame>
      <PageBody>
        <TextLine $size={14.3}>
          Home Page | <SiteLink>SHA1 in JAVA</SiteLink> | <SiteLink>Secure password generator</SiteLink> | <SiteLink>Linux</SiteLink>
        </TextLine>
        <PageTitle>SHA1 and other hash functions online generator</PageTitle>
        <HashForm>
          <HashInput>UiPath</HashInput>
          <HashButton>hash</HashButton>
        </HashForm>
        <AlgoSelect>sha512 <ChevronDown size={12} strokeWidth={2.4} /></AlgoSelect>
        <TextLine $top={18} $size={17.4}>Result for</TextLine>
        <HashRow><HashLabel>sha512:</HashLabel><HashValue>{hashValue}</HashValue></HashRow>
        <TextLine $top={102} $size={17.4}>
          <SiteLink $pad={1}>SHA-1</SiteLink> <SiteLink $pad={1}>MD5</SiteLink> on Wikipedia
        </TextLine>
        <TextLine $top={100} $size={17.4}>
          <SiteLink $pad={1}>We love SPAIN</SiteLink> and <SiteLink $pad={1}>oldpics.org</SiteLink>
        </TextLine>
        <AdCard>
          <div>
            <AdSponsor>DISHA by Indian Air Force</AdSponsor>
            <AdTitle>IAF Recruitment 2023</AdTitle>
          </div>
          <AdOpen>OPEN</AdOpen>
          <AdChoices $bottom={19}><Info size={10} /></AdChoices>
          <AdChoices $bottom={4}><X size={10} /></AdChoices>
        </AdCard>
      </PageBody>
      <AnchorTab><ChevronDown size={15} strokeWidth={1.4} /></AnchorTab>
      <AnchorAd>
        <FameBanner>
          <FameCircle><FameMark /></FameCircle>
          <FameBrand>
            <FameTm>TM</FameTm>
            <FameName>famenet</FameName>
            <FameTag>connecting brands with influencers</FameTag>
          </FameBrand>
          <FameCopy>
            <FameLine $size={32} $line={40}>A world where you get paid</FameLine>
            <FameLine $size={32} $line={50}>for<FameWord>facebook</FameWord>post</FameLine>
          </FameCopy>
          <JoinNow>JOIN NOW</JoinNow>
          <AdBadge><Info size={11} /><X size={11} /></AdBadge>
        </FameBanner>
      </AnchorAd>
      <HScrollbar>
        <span>◂</span>
        <HThumb />
        <HEnd>▸</HEnd>
      </HScrollbar>
    </PageFrame>
  )
}

function Ribbons() {
  return (
    <Ribbon>
      {ribbonItems.map(item => {
        if (item.key === 'clip') {
          return (
            <RibbonClip key="clip">
              <ClipAction><Scissors size={11} strokeWidth={1.2} />Cut</ClipAction>
              <ClipAction><Undo2 size={11} strokeWidth={1.2} />Undo</ClipAction>
              <ClipAction><Copy size={11} strokeWidth={1.2} />Copy</ClipAction>
              <ClipAction><Redo2 size={11} strokeWidth={1.2} />Redo</ClipAction>
              <ClipAction><Clipboard size={11} strokeWidth={1.2} />Paste</ClipAction>
            </RibbonClip>
          )
        }
        const Icon = item.icon
        return (
          <RibbonItem key={item.key} $w={item.w} $sep={item.sep} $dim={item.dim}>
            <Icon size={21} strokeWidth={1.3} color={item.color} fill={item.fill ? item.color : 'none'} />
            <span>{item.label[0]}</span>
            <span>{item.label[1]}</span>
          </RibbonItem>
        )
      })}
      <RibbonCollapse><ChevronUp size={10} /></RibbonCollapse>
    </Ribbon>
  )
}

function ActivitiesPanel() {
  return (
    <SideColumn $w={199} $gap={5}>
      <PanelBox>
        <PanelHeader $active>
          Activities<HeaderDots $active /><ChevronDown size={9} /><Pin size={9} />
        </PanelHeader>
        <IconBar>
          <SquarePlus size={13} strokeWidth={1.2} />
          <SquareMinus size={13} strokeWidth={1.2} />
          <Filter size={13} strokeWidth={1.2} />
        </IconBar>
        <TreeSearch>
          <Search size={11} strokeWidth={1.4} />
          write range
          <SearchClear><X size={10} /></SearchClear>
        </TreeSearch>
        <Tree>
          <TreeRow $indent={4}><ChevronDown size={9} />Available</TreeRow>
          <TreeRow $indent={19}><ChevronDown size={9} />System</TreeRow>
          <TreeRow $indent={33}><ChevronDown size={9} />File</TreeRow>
          <TreeRow $indent={48}><ChevronDown size={9} />Workbook</TreeRow>
          <TreeRow $indent={78} $hit>
            <Table2 size={12} color="#8ec6f0" />
            <span><TreeHit>Write Range</TreeHit> Workbook</span>
          </TreeRow>
        </Tree>
      </PanelBox>
      <DockTabs>
        <DockTab $w={50}><Folder size={9} />Project</DockTab>
        <DockTab $w={58} $active><Clipboard size={9} />Activities</DockTab>
        <DockTab $w={60}><Hand size={9} />Snippets</DockTab>
      </DockTabs>
    </SideColumn>
  )
}

function DesignerCard() {
  return (
    <Activity $w={362} $h={559}>
      <ActivityHead $mark>
        <Monitor size={12} strokeWidth={1.2} />
        End Process
        <HeadEnd><MoreVertical size={10} /></HeadEnd>
      </ActivityHead>
      <Muted $pad="4px 0 0 16px">End process and close all applications used.</Muted>
      <EntryLabel $top={14}><CircleHelp size={9} />Entry</EntryLabel>
      <Activity $w={337} $h={491} $left={12} $top={2}>
        <TryCard>
          <ActivityHead $bg="#5f6067">
            <Lock size={11} strokeWidth={1.2} />
            Try to close all aplications
            <HeadEnd><MoreVertical size={10} /><ChevronsUp size={10} /></HeadEnd>
          </ActivityHead>
          <TryRows>
            <TryRow $bold>Try<Hint>Invoke CloseAllApplication...</Hint></TryRow>
            <TryRow $bold>Catches</TryRow>
            <TryRow>Exception<Hint>Failed to close applications...</Hint></TryRow>
            <TryRow><Hint>Add new catch</Hint></TryRow>
          </TryRows>
          <FinallyBox>
            <FinallyLabel>Finally</FinallyLabel>
            <WhiteBar />
            <Activity $w={300} $h={286} $top={4}>
              <ActivityHead>
                <Route size={12} strokeWidth={1.2} />
                If SystemException IsNot Nothing
                <HeadEnd><MoreVertical size={10} /><ChevronsUp size={10} /></HeadEnd>
              </ActivityHead>
              <NameTip>Mihai Daniel I...</NameTip>
              <GreenStroke $left={44} $top={-4} $w={115} />
              <PageCursor />
              <FieldLabel $left={16} $top={4}>Condition *</FieldLabel>
              <ExprField $w={269} $h={16} $left={15}>
                <ExprBrace>{'{ }'}</ExprBrace>
                <ExprText>SystemException IsNot Nothing AndAlso (Config Is Not</ExprText>
                <ExprTool><Maximize2 size={8} /></ExprTool>
                <ExprTool $line><CirclePlus size={10} color="#4a9be0" /></ExprTool>
              </ExprField>
              <FieldLabel $left={13} $top={10}>Then</FieldLabel>
              <Activity $w={275} $h={96} $left={13} $top={3}>
                <Activity $w={243} $h={84} $left={15} $top={5}>
                  <ActivityHead>
                    <Database size={11} strokeWidth={1.2} />
                    Terminate Main Workflow
                    <HeadEnd><MoreVertical size={10} /><ChevronsUp size={10} /></HeadEnd>
                  </ActivityHead>
                  <GreenStroke $left={-1} $top={0} $w={163} />
                  <FieldLabel $left={15} $top={4}>Reason</FieldLabel>
                  <ExprField $w={212} $h={17} $left={15}>
                    <ExprBrace>{'{ }'}</ExprBrace>
                    <ExprText $hint>Enter a VB expression</ExprText>
                    <ExprTool><Maximize2 size={8} /></ExprTool>
                    <ExprTool $line><CirclePlus size={10} color="#aaa" /></ExprTool>
                  </ExprField>
                  <AdvancedLine><ChevronDown size={9} color="#ccc" />Show advanced options</AdvancedLine>
                </Activity>
              </Activity>
              <FieldLabel $left={13} $top={5}>Else</FieldLabel>
              <Activity $w={275} $h={83} $left={13} $top={4}>
                <DropHint>Drop Activity Here</DropHint>
              </Activity>
            </Activity>
            <WhiteBar $margin="4px 0 0 0" />
          </FinallyBox>
        </TryCard>
      </Activity>
    </Activity>
  )
}

function CenterPanel() {
  return (
    <CenterColumn>
      <DocTabs>
        <DocTab>Main *<X size={9} /></DocTab>
        <DocTabEnd><ChevronDown size={9} /></DocTabEnd>
      </DocTabs>
      <Breadcrumbs>
        Main <ChevronRight size={8} color="#555" /> General Business ... <ChevronRight size={8} color="#555" /> End Process
        <CrumbEnd><span>Expand All</span><span>Collapse All</span></CrumbEnd>
      </Breadcrumbs>
      <CanvasRow>
        <Canvas><DesignerCard /></Canvas>
        <VScroll><ChevronUp size={9} /><VThumb /><ChevronDown size={9} /></VScroll>
      </CanvasRow>
      <DesignerFooter>
        <span>Variables</span><span>Arguments</span><span>Imports</span>
        <ZoomTools>
          <Hand size={11} /><Search size={10} /><span>100%</span>
          <ZoomGap /><ChevronDown size={8} />
          <Square size={10} fill="#999" /><Square size={10} fill="#bbb" />
        </ZoomTools>
      </DesignerFooter>
    </CenterColumn>
  )
}

function PropertiesPanel() {
  return (
    <SideColumn $w={259} $gap={0}>
      <PanelBox>
        <PanelHeader>
          Properties<HeaderDots /><ChevronDown size={9} /><Pin size={9} />
        </PanelHeader>
        <TypeLine>System.Activities.Statements.TryCatch</TypeLine>
        <PropGroup><SquareMinus size={8} />Common</PropGroup>
        <PropRow><PropKey>DisplayName</PropKey><PropValue>Try to close all aplications</PropValue></PropRow>
        <PropGroup><SquareMinus size={8} />Misc</PropGroup>
        <PropRow><PropKey>Private</PropKey><PropValue><PropCheck /></PropValue></PropRow>
      </PanelBox>
      <DockTabs>
        <DockTab $w={51}><Wrench size={9} />Obje...</DockTab>
        <DockTab $w={50} $active><Wrench size={9} />Prop...</DockTab>
        <DockTab $w={55}><ListTree size={9} />Outli...</DockTab>
        <DockTab $w={53}><DataIcon size={9} />Data...</DockTab>
        <DockTab $w={50}><FlaskConical size={9} />Test E...</DockTab>
      </DockTabs>
    </SideColumn>
  )
}

function UiPathStudio() {
  return (
    <Studio>
      <StudioTitle>
        <StudioMenu $w={41}>HOME</StudioMenu>
        <StudioMenu $w={55} $active>DESIGN</StudioMenu>
        <StudioMenu $w={44}>DEBUG</StudioMenu>
        <TitleTools>
          <TitleTool $w={23}><Search size={12} /></TitleTool>
          <TitleTool $w={22}><MessageSquare size={12} /></TitleTool>
          <TitleTool $w={22}><CircleHelp size={12} /></TitleTool>
          <TitleTool $w={26}>VH</TitleTool>
          <TitleTool $w={32}><Minus size={11} /></TitleTool>
          <TitleTool $w={32}><Copy size={10} /></TitleTool>
          <TitleTool $w={28}><X size={11} /></TitleTool>
        </TitleTools>
      </StudioTitle>
      <Ribbons />
      <PanelRow>
        <ActivitiesPanel />
        <CenterPanel />
        <PropertiesPanel />
      </PanelRow>
      <OutputTabs>
        <OutputTab $w={33}>Output</OutputTab>
        <OutputTab $w={62}>Find References</OutputTab>
        <OutputTab $w={46}>Breakpoints</OutputTab>
        <OutputTab $w={36}>Error List</OutputTab>
      </OutputTabs>
      <StatusBar>
        <StatusPart $gap={24}><Square size={9} fill="#fff" />⌄</StatusPart>
        <StatusPart $gap={24}>● virhum@gmail.com's works... ⌄</StatusPart>
        <StatusPart $gap={10}>✚ Add To Source Control ⌄</StatusPart>
        <StatusPart>VB, Windows</StatusPart>
      </StatusBar>
      <BlackBand />
      <InnerTaskbar>
        <Weather><SunDot /><div>4°C<br />Soleado</div></Weather>
        <Start size={18} />
        <InnerSearch><Search size={9} />Búsqueda</InnerSearch>
        {innerTaskIcons.map(t => <InnerSlot key={t.key} $bg={t.bg}>{t.icon()}</InnerSlot>)}
        <InnerClock>11:31<br />19/01/2023</InnerClock>
      </InnerTaskbar>
    </Studio>
  )
}

export default function App() {
  return (
    <Screen>
      <GlobalStyle />

      <Browser>
        <TabStrip $bg="#cccccc">
          <TabActions $w={48} $sep><Square size={14} strokeWidth={1.6} /></TabActions>
          <Tab $w={238} $pad={10}>
            <UiPathIcon />
            <TabTitle>Transactions - UiPath Orchestrator</TabTitle>
            <X size={14} strokeWidth={1.2} />
          </Tab>
          <Tab $w={240} $pad={10} $active>
            <ShaIcon />
            <TabTitle>SHA1 online</TabTitle>
            <X size={14} strokeWidth={1.2} />
          </Tab>
          <NewTab><Plus size={17} strokeWidth={1.2} /></NewTab>
          <WindowButtons />
        </TabStrip>
        <AddressRow>
          <NavButton><ArrowLeft size={17} strokeWidth={1.2} /></NavButton>
          <NavButton><RotateCw size={16} strokeWidth={1.2} /></NavButton>
          <AddressPill>
            <TriangleAlert size={15} fill="#666" color="#666" />
            <SecurityNote>Not secure</SecurityNote>
            <UrlText $left={13} $size={14}><UrlHost>www.sha1-online.com</UrlHost></UrlText>
            <PillTools>
              <PillTool>A)</PillTool>
              <PillTool><Star size={16} strokeWidth={1.2} /></PillTool>
            </PillTools>
          </AddressPill>
          <BrowserTools sep />
        </AddressRow>
        <ShaPage />
        <Taskbar>
          <Start />
          <SearchPill><Search size={15} strokeWidth={1.5} />Search</SearchPill>
          <SharedTaskIcons />
          <Tray $pad={20}>
            <TraySlot $w={20}><ChevronUp size={14} strokeWidth={1.3} /></TraySlot>
            <TraySlot $w={30}><Mic size={15} strokeWidth={1.4} color="#0a67c0" /></TraySlot>
            <TraySlot $w={40}>ENG<br />IN</TraySlot>
            <TraySlot $w={30}><Monitor size={15} strokeWidth={1.2} /></TraySlot>
            <TraySlot $w={22}><Volume1 size={15} strokeWidth={1.2} /></TraySlot>
            <TraySlot $w={24}><Battery size={15} strokeWidth={1.4} /></TraySlot>
            <TraySlot $w={24} />
            <Clock>16:00<br />19-01-2023</Clock>
            <NotifyDot>1</NotifyDot>
          </Tray>
        </Taskbar>
      </Browser>

      <Browser>
        <TabStrip $bg="#e8e8e8">
          <TabActions $w={46}><Square size={14} strokeWidth={1.6} /></TabActions>
          <Tab $w={242} $pad={12} $active>
            <ZoomIcon />
            <RecDot />
            <TabTitle>Roxana Larisa Unc's Person...</TabTitle>
            <X size={14} strokeWidth={1.2} />
          </Tab>
          <NewTab><Plus size={17} strokeWidth={1.2} /></NewTab>
          <WindowButtons dim />
        </TabStrip>
        <AddressRow $line="#d8d8d8">
          <NavButton><ArrowLeft size={17} strokeWidth={1.2} /></NavButton>
          <NavButton><RotateCw size={16} strokeWidth={1.2} /></NavButton>
          <AddressPill>
            <Lock size={14} strokeWidth={1.3} color="#555" />
            <UrlText $left={26} $size={13.8}>
              https://<UrlHost>uipath.zoom.us</UrlHost>/wc/8052484116/join?track_id=&amp;jmf_code=&amp;meeting_result=&amp;tk=&amp;cap=undefined&amp;refTK=&amp;rm=true&amp;epk=lInp84oSB3LLKKxevYv425FxG5Sd3mD60aM4FG7ufPbvAiqx4SLhYy80JXwnW1gkRYa
            </UrlText>
            <PillTools>
              <PillTool><Mic size={14} strokeWidth={1.2} /></PillTool>
              <PillTool>A)</PillTool>
              <PillTool><Star size={16} strokeWidth={1.2} /></PillTool>
            </PillTools>
          </AddressPill>
          <BrowserTools />
        </AddressRow>
        <MeetingStage>
          <RecBadge>REC</RecBadge>
          <CaptionToast>
            Live Transcription (Closed Captioning) has been enabled
            <WhoButton><User size={13} color="#6aa8f0" />Who can see this transcript?</WhoButton>
            <ToastClose><X size={13} strokeWidth={1.4} /></ToastClose>
          </CaptionToast>
          <ShareFrame>
            <UiPathStudio />
            <ViewingBanner>
              You are viewing Virginia Huerta's screen
              <MicOff size={13} strokeWidth={1.6} />
              <BannerRec>REC</BannerRec>
            </ViewingBanner>
            <ViewOptions>View Options<ChevronDown size={17} /></ViewOptions>
          </ShareFrame>
        </MeetingStage>
        <Taskbar>
          <Start />
          <SearchPill><Search size={15} strokeWidth={1.5} />Search</SearchPill>
          <SharedTaskIcons />
          <Tray $pad={19}>
            <Clock>16:00<br />19-01-2023</Clock>
          </Tray>
        </Taskbar>
      </Browser>
    </Screen>
  )
}
